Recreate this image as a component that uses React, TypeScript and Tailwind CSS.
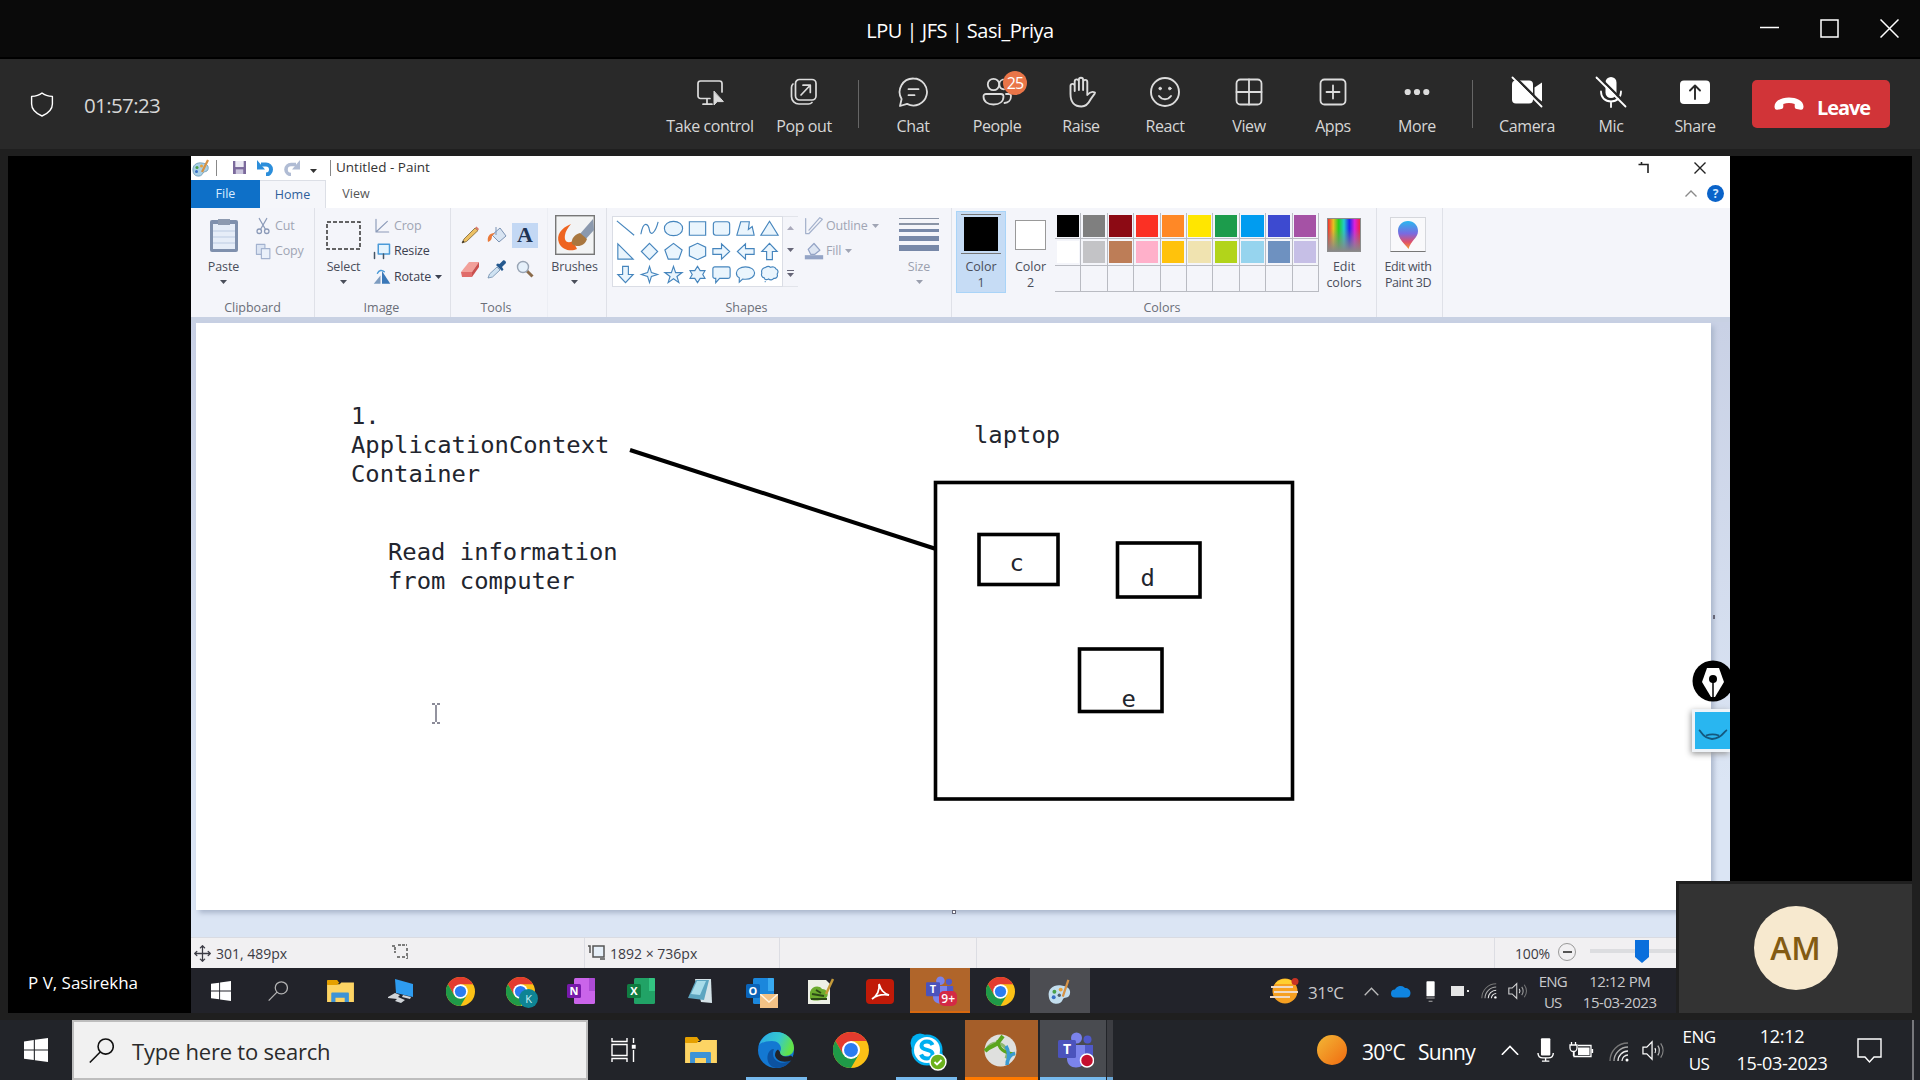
import React from "react";

type P = { children?: React.ReactNode; className?: string };

function Ico({
  s = 24,
  w = 1.5,
  className = "",
  children,
  box = "0 0 24 24",
  h,
}: P & { s?: number; w?: number; box?: string; h?: number }) {
  return (
    <svg
      width={s}
      height={h ?? s}
      viewBox={box}
      fill="none"
      stroke="currentColor"
      strokeWidth={w}
      strokeLinecap="round"
      strokeLinejoin="round"
      className={"shrink-0 " + className}
    >
      {children}
    </svg>
  );
}

/* ---------- meeting toolbar ---------- */

function ToolItem({ label, children, className = "w-[84px]" }: P & { label: string }) {
  return (
    <div className={"flex shrink-0 flex-col items-center pt-[17px] " + className}>
      <div className="flex h-[32px] items-center">{children}</div>
      <div className="mt-[6px] text-[16px] leading-[24px] tracking-[-0.025em] whitespace-nowrap text-[#d6d6d6]">
        {label}
      </div>
    </div>
  );
}

function Bar({ className = "mx-[12px]" }: P) {
  return <div className={"mt-[21px] h-[48px] w-px shrink-0 bg-[#666] " + className} />;
}

function MeetingBar() {
  return (
    <div className="flex h-[90px] items-start bg-[#292929] text-[#dcdcdc]">
      <div className="flex h-[90px] w-[658px] shrink-0 items-center pl-[30px]">
        <Ico s={24} h={26} w={1.4} box="0 0 24 26" className="text-white">
          <path d="M12 2 C9 4.4 5.5 5.2 1.6 5.4 V13 C1.6 18.6 6 22.4 12 25 C18 22.4 22.4 18.6 22.4 13 V5.4 C18.5 5.2 15 4.4 12 2Z" />
        </Ico>
        <span className="ml-[30px] pt-[2px] text-[20.5px] tracking-[-0.03em] text-[#d6d6d6]">01:57:23</span>
      </div>
      <ToolItem label="Take control" className="w-[104px]">
        <Ico s={30} w={1.7} box="0 0 30 30">
          <path d="M15 21.5H5.5a2.5 2.5 0 0 1-2.500-2.500V6.500A2.500 2.500 0 0 1 5.500 4h19A2.500 2.500 0 0 1 27 6.500V15M12 22v5M8 27.200h9" />
          <path d="M19 14.500V28l3.200-3.400H28Z" fill="currentColor" strokeWidth="1" />
        </Ico>
      </ToolItem>
      <ToolItem label="Pop out">
        <Ico s={30} w={1.7} box="0 0 30 30">
          <rect x="6.500" y="2.500" width="20.500" height="20.500" rx="4" />
          <path d="M4 7a5 5 0 0 0-1.500 3.500v9A7.500 7.500 0 0 0 10 27h9.500a5 5 0 0 0 3.500-1.500M12 18l9-9.500M14 8.200h7.300v7.300" />
        </Ico>
      </ToolItem>
      <Bar />
      <ToolItem label="Chat">
        <Ico s={32} w={1.8} box="0 0 32 32">
          <path d="M16.500 2.500a13.500 13.500 0 1 1-6.400 25.400L3 30l1.600-7A13.500 13.500 0 0 1 16.500 2.500ZM11.500 13.200h10M11.500 19.200h6" />
        </Ico>
      </ToolItem>
      <ToolItem label="People">
        <div className="relative">
          <Ico s={32} w={1.8} box="0 0 32 32">
            <circle cx="12.500" cy="8.500" r="5.700" />
            <path d="M5 18h15a2.500 2.500 0 0 1 2.500 2.500c0 5-4 8-10 8s-10-3-10-8A2.500 2.500 0 0 1 5 18Z" />
            <path d="M22 3.500a5 5 0 0 0 1 9.800M25 18h3a2 2 0 0 1 2 2c0 4-2.500 6.800-6.500 7" />
          </Ico>
          <div className="absolute -top-[5px] left-[22px] flex h-[24px] w-[24px] items-center justify-center rounded-full bg-[#e97548] text-[16px] tracking-[-0.05em] text-white">
            25
          </div>
        </div>
      </ToolItem>
      <ToolItem label="Raise">
        <Ico s={32} w={1.9} box="0 0 32 32" className="ml-[2px]">
          <path d="M4.500 18V10a2.100 2.100 0 0 1 4.200 0v5V5.500a2.100 2.100 0 0 1 4.200 0V14 3.800a2.100 2.100 0 0 1 4.200 0V14 6a2.100 2.100 0 0 1 4.200 0v13c2-2.500 4.700-4 7.700-2.500-.3 2-2.500 3.500-4.500 7-2 4-4.500 7-9 7-7 0-11-4.500-11-12.500Z" />
        </Ico>
      </ToolItem>
      <ToolItem label="React">
        <Ico s={32} w={1.9} box="0 0 32 32">
          <circle cx="16" cy="16" r="14" />
          <path d="M10 20c1.500 2 3.500 3.200 6 3.200s4.500-1.200 6-3.200" />
          <circle cx="11.200" cy="12.500" r="1.300" fill="currentColor" strokeWidth="1" />
          <circle cx="20.800" cy="12.500" r="1.300" fill="currentColor" strokeWidth="1" />
        </Ico>
      </ToolItem>
      <ToolItem label="View">
        <Ico s={30} w={1.8} box="0 0 30 30">
          <rect x="2.500" y="2.500" width="25" height="25" rx="4" />
          <path d="M15 2.500v25M2.500 15h25" />
        </Ico>
      </ToolItem>
      <ToolItem label="Apps">
        <Ico s={30} w={1.8} box="0 0 30 30">
          <rect x="2.500" y="2.500" width="25" height="25" rx="4" />
          <path d="M15 8.500v13M8.500 15h13" />
        </Ico>
      </ToolItem>
      <ToolItem label="More">
        <Ico s={28} box="0 0 28 28">
          <g fill="currentColor" stroke="none">
            <circle cx="4.700" cy="14" r="3.100" />
            <circle cx="14" cy="14" r="3.100" />
            <circle cx="23.300" cy="14" r="3.100" />
          </g>
        </Ico>
      </ToolItem>
      <Bar className="mr-[12px] ml-[13px]" />
      <ToolItem label="Camera">
        <Ico s={32} w={1.8} box="0 0 32 32" className="text-white">
          <rect x="1" y="4.500" width="21" height="23" rx="4" fill="currentColor" stroke="none" />
          <path d="M23.500 11.500 31 6.500v19l-7.500-5Z" fill="currentColor" stroke="none" />
          <path d="M3.500 .5 32.500 29.500" stroke="#292929" strokeWidth="2.400" />
          <path d="M1.500 1.500 30.500 30.500" />
        </Ico>
      </ToolItem>
      <ToolItem label="Mic">
        <Ico s={32} w={1.8} box="0 0 32 32" className="text-white">
          <rect x="10.500" y="1" width="11" height="21" rx="5.500" fill="currentColor" stroke="none" />
          <path d="M6 15.500c0 6 4 10 10 10s10-4 10-10M16 26v5" />
          <path d="M3.500 .5 32.500 29.500" stroke="#292929" strokeWidth="2.400" />
          <path d="M1.500 1.500 30.500 30.500" />
        </Ico>
      </ToolItem>
      <ToolItem label="Share">
        <Ico s={32} w={1.900} box="0 0 32 32" className="text-white">
          <rect x="1" y="4.500" width="30" height="23.500" rx="4" fill="currentColor" stroke="none" />
          <path d="M16 23V10M11 14.500l5-5 5 5" stroke="#292929" />
        </Ico>
      </ToolItem>
      <button className="mt-[21px] ml-[15px] flex h-[48px] w-[138px] shrink-0 items-center rounded-[5px] bg-[#d13438] pl-[22px] text-white">
        <svg width="30" height="14" viewBox="0 0 30 14" fill="#fff">
          <path d="M15 .5C22 .5 29.500 3.500 29.500 9.500c0 2.200-1 3.600-2.800 3.300l-4-.8c-1.400-.3-2-1.300-2-2.600V7c-3.600-1.200-7.800-1.200-11.400 0v2.400c0 1.300-.6 2.300-2 2.600l-4 .8C1.500 13.100.5 11.700.5 9.500.5 3.500 8 .5 15 .5Z" />
        </svg>
        <span className="ml-[13px] pt-[8px] text-[20px] leading-[24px] font-bold tracking-[-0.055em]">Leave</span>
      </button>
    </div>
  );
}

/* ---------- paint ribbon ---------- */

function Tri({ className = "" }: P) {
  return (
    <svg width="7" height="4" viewBox="0 0 7 4" className={"shrink-0 " + className}>
      <path d="M0 0h7L3.500 4Z" fill="currentColor" />
    </svg>
  );
}

function Group({ label, className = "", shift = "", children }: P & { label: string; shift?: string }) {
  return (
    <div className={"flex h-[109px] shrink-0 flex-col border-r border-[#dfe1e8] " + className}>
      <div className="flex h-[90px]">{children}</div>
      <div className={"text-center text-[12.5px] leading-[19px] text-[#6a6e78] " + shift}>{label}</div>
    </div>
  );
}

function BigTool({ label, children, className = "" }: P & { label: string }) {
  return (
    <div className={"flex shrink-0 flex-col items-center " + className}>
      <div className="flex h-[51px] items-center pt-[3px]">{children}</div>
      <div className="text-[12.5px] leading-[16px] tracking-[-0.01em]">{label}</div>
      <Tri className="mt-[5px]" />
    </div>
  );
}

function Row({ label, children, className = "text-[#3c4150]", arrow }: P & { label: string; arrow?: boolean }) {
  return (
    <div className={"flex h-[25.500px] items-center text-[12.5px] tracking-[-0.015em] " + className}>
      <div className="flex w-[20px] shrink-0 justify-center">{children}</div>
      <span className="ml-[2px] pt-px">{label}</span>
      {arrow && <Tri className="ml-[4px]" />}
    </div>
  );
}

const SHAPES = [
  "M3 4 L21 19",
  "M3 18 C6 2 11 8 12 14 C13 20 18 17 21 5",
  "M12 4.500c5.500 0 9.500 3.300 9.500 7.500s-4 7.500-9.500 7.500S2.500 16.200 2.500 12 6.500 4.500 12 4.500Z",
  "M3.500 5h17v14h-17Z",
  "M6 5h12a2.500 2.500 0 0 1 2.500 2.500v9A2.500 2.500 0 0 1 18 19H6a2.500 2.500 0 0 1-2.500-2.500v-9A2.500 2.500 0 0 1 6 5Z",
  "M7 5h9l-1 8 4-3 2 9H3Z",
  "M12 4.500 21 19H3Z",
  "M4 4v16h16Z",
  "M12 3.500 20.500 12 12 20.500 3.500 12Z",
  "M12 3.500 21 10.500 17.500 20h-11L3 10.500Z",
  "M12 3.500 20.500 7.500v9L12 20.500 3.500 16.500v-9Z",
  "M3 9h9V4l8.500 8-8.500 8v-5H3Z",
  "M21 9h-9V4l-8.500 8 8.500 8v-5h9Z",
  "M9 20.500V12H4l8-8.500L20 12h-5v8.500Z",
  "M9 3.500V12H4l8 8.500L20 12h-5V3.500Z",
  "M12 3.500 14 10l6.500 2-6.500 2-2 6.500-2-6.500L3.500 12 10 10Z",
  "M12 3.500 14.200 10H21l-5.400 4 2 6.500-5.600-4-5.600 4 2-6.500L3 10h6.800Z",
  "M12 3.500 14.800 8h5L17.500 12l2.300 4h-5L12 20.500 9.200 16h-5L6.500 12 4.200 8h5Z",
  "M5 4h14a2 2 0 0 1 2 2v8a2 2 0 0 1-2 2h-9l-4 4.500V16H5a2 2 0 0 1-2-2V6a2 2 0 0 1 2-2Z",
  "M12 4c5.500 0 9.500 2.800 9.500 6.500S17.500 17 12 17c-1 0-1.500 0-3-.3L5.500 20V15.500C3.500 14.500 2.500 12.500 2.500 10.500 2.500 6.800 6.500 4 12 4Z",
  "M8 4.500c2-1.500 4-1 5 0 2-1 5-.5 5.500 1.500 2.500.8 3 3.500 1.500 5.500 1 3-1 5-3.500 4.500-1 2-4 2-5.500.7C9 18 7 17.500 6.500 15.500 4 15 3 12.500 4 10.500 3 7.500 5 5 8 4.500ZM7 19.500h1",
];

const COLORS = [
  "#000000", "#7f7f7f", "#8c0a14", "#fb3024", "#ff8826", "#ffe600", "#1c9c4c", "#009cf0", "#3d4ad0", "#a552a5",
  "#ffffff", "#c3c3c6", "#bd7d57", "#ffb0ca", "#ffc20c", "#f0e3b0", "#b2d41a", "#96d4ee", "#6e91c0", "#c6bfe6",
  "", "", "", "", "", "", "", "", "", "",
];

function Palette() {
  return (
    <svg width="20" height="18" viewBox="0 0 20 18">
      <path d="M2 12C1 6 6 3 11 4c5 .5 7 3 6 6.500-1 3-4 1.500-5 3.500-1 2.500-3 3.500-6 3C3.500 16.500 2.300 14.500 2 12Z" fill="#a9d0e6" stroke="#5f8fae" strokeWidth=".7" />
      <circle cx="6" cy="8.500" r="1.500" fill="#4aa04a" />
      <circle cx="10.500" cy="7" r="1.500" fill="#e8a13a" />
      <circle cx="5.500" cy="12.500" r="1.500" fill="#3a6fc4" />
      <path d="m11 13 6-12" stroke="#d69245" strokeWidth="2.200" />
    </svg>
  );
}

function PaintTitle() {
  return (
    <div className="flex h-[24px] items-center bg-white pb-px text-[#333]">
      <Palette />
      <div className="ml-[5px] h-[16px] w-px bg-[#888]" />
      <svg width="13" height="13" viewBox="0 0 14 14" className="ml-[16px]">
        <path d="M0 0h14v14H0Z" fill="#7b6a9c" />
        <path d="M2.500 0h9v6.500h-9Z" fill="#eceaf4" />
        <path d="M3 9h8v5H3Z" fill="#c9c4dc" />
      </svg>
      <svg width="17" height="16" viewBox="0 0 17 16" className="ml-[11px]">
        <path d="M4 4.500h5a5 5 0 0 1 0 10" fill="none" stroke="#2b8edb" strokeWidth="4" />
        <path d="M0 0v9.500h8Z" fill="#2b8edb" />
      </svg>
      <svg width="17" height="16" viewBox="0 0 17 16" className="ml-[9px]">
        <path d="M13 4.500H8a5 5 0 0 0 0 10" fill="none" stroke="#b0bcd4" strokeWidth="3.600" />
        <path d="M17 0v9.500H9Z" fill="#b0bcd4" />
      </svg>
      <Tri className="mt-[6px] ml-[10px]" />
      <div className="ml-[13px] h-[16px] w-px bg-[#888]" />
      <span className="ml-[5px] text-[13.5px]">Untitled - Paint</span>
      <svg width="12" height="11" viewBox="0 0 12 11" className="ml-auto" fill="none" stroke="#222" strokeWidth="1.600">
        <path d="M.5 2.500h9.500v8.500M3.500 0v3" />
      </svg>
      <svg width="12" height="12" viewBox="0 0 12 12" className="mr-[24px] ml-[44px]" fill="none" stroke="#222" strokeWidth="1.400">
        <path d="m.5.5 11 11M11.500.5l-11 11" />
      </svg>
    </div>
  );
}

function PaintTabs() {
  return (
    <div className="flex h-[28px] items-stretch bg-white text-[12.5px] leading-[27px]">
      <div className="w-[69px] bg-[#0e70c8] text-center text-[#d8ecff]">File</div>
      <div className="w-[66px] border-t border-r border-[#dcdfe6] bg-[#f5f6fa] text-center text-[#2f5f9a]">Home</div>
      <div className="w-[60px] text-center text-[#555]">View</div>
      <svg width="12" height="7" viewBox="0 0 12 7" className="mt-[10px] ml-auto" fill="none" stroke="#8a8a8a" strokeWidth="1.400">
        <path d="M.5 6.500 6 1l5.500 5.500" />
      </svg>
      <div className="mt-[5px] mr-[6px] ml-[10px] h-[17px] w-[17px] rounded-full bg-[#0a63c9] text-center text-[12px] leading-[17px] font-bold text-[#cfe6ff]">
        ?
      </div>
    </div>
  );
}

function Ribbon() {
  return (
    <div className="flex h-[109px] bg-[#f4f5fa] text-[#4a4e5a]">
      <Group label="Clipboard" className="w-[124px]">
        <BigTool label="Paste" className="w-[65px]">
          <svg width="30" height="36" viewBox="0 0 30 36">
            <rect x="1" y="3" width="28" height="32" rx="2" fill="#7f90ad" />
            <rect x="4" y="7" width="22" height="25" fill="#e6edf8" />
            <path d="M9 2h12v6H9Z" fill="#8d9ab0" />
            <path d="M4 14h22M4 20h22M4 26h22" stroke="#bccbe2" />
          </svg>
        </BigTool>
        <div className="-ml-[3px] pt-[5px]">
          <Row label="Cut" className="text-[#a0a5b4]">
            <Ico s={18} w={1.700} className="text-[#8b9ab8]">
              <path d="M7 2l8 14M17 2 9 16" />
              <circle cx="7" cy="19" r="3" />
              <circle cx="17" cy="19" r="3" />
            </Ico>
          </Row>
          <Row label="Copy" className="text-[#a0a5b4]">
            <Ico s={17} w={1.600} className="text-[#a3b2cf]">
              <path d="M2 2h12v14H2Z" fill="#dbe4f3" />
              <path d="M9 8h12v14H9Z" fill="#eaf0fa" />
            </Ico>
          </Row>
        </div>
      </Group>
      <Group label="Image" className="w-[136px]" shift="-ml-[2px]">
        <BigTool label="Select" className="w-[57px]">
          <svg width="35" height="29" viewBox="0 0 35 29">
            <rect x="1" y="1" width="33" height="27" fill="none" stroke="#333" strokeWidth="1.500" strokeDasharray="4 2" />
          </svg>
        </BigTool>
        <div className="pt-[5px]">
          <Row label="Crop" className="text-[#a0a5b4]">
            <Ico s={16} className="text-[#8b9ab8]" w={1.700}>
              <path d="M3 2v19h19M3 21 20 5" />
            </Ico>
          </Row>
          <Row label="Resize">
            <Ico s={18} className="text-[#4a9ad8]" w={2}>
              <path d="M7 3h15v13H7Z" fill="#e5f3fd" />
              <path d="M2 14v8M14 16v6" stroke="#456" />
            </Ico>
          </Row>
          <Row label="Rotate" arrow>
            <Ico s={18}>
              <path d="M12 4v17h11Z" fill="#3a78b8" stroke="none" />
              <path d="M10 10v11H1Z" fill="#7d9cc0" stroke="none" />
              <path d="M6 7c2-4 6-5 9-2" stroke="#4a9ad8" strokeWidth="2" />
            </Ico>
          </Row>
        </div>
      </Group>
      <Group label="Tools" className="w-[97px] border-r-[#eceef4] pr-[6px]">
        <div className="grid h-[78px] grid-cols-[27px_28px_28px] grid-rows-[34px_34px] place-items-center pt-[10px] pl-[5px]">
          <svg width="18" height="18" viewBox="0 0 18 18">
            <path d="M1 17 3 13 14 2l3 2.500L5.500 15.500Z" fill="#ecc063" stroke="#7b6336" strokeWidth=".8" />
            <path d="m14 2 3 2.500 1-1.500L15.500.5Z" fill="#dc7a6a" />
            <path d="m1 17 1-2.500L3.500 16Z" fill="#222" />
          </svg>
          <svg width="20" height="18" viewBox="0 0 20 18">
            <path d="m5 9 8-7 6 8-7 6Z" fill="#d8e4f2" stroke="#7b93b4" />
            <path d="M1 16c-1-5 1-9 7-9l-3 3c0 3-1 5-4 6Z" fill="#ea7a3a" />
            <path d="M9 1v8" stroke="#7b93b4" />
          </svg>
          <div className="flex h-[25px] w-[26px] items-center justify-center bg-[#c3d8f4] font-['Liberation_Serif'] text-[22px] leading-none font-bold text-[#1e3454]">
            A
          </div>
          <svg width="20" height="17" viewBox="0 0 20 17">
            <path d="m1 11 8-10h10l-7 10Z" fill="#f2a09a" />
            <path d="M1 11h11v5H2Z" fill="#e06c6a" />
            <path d="m12 11 7-10v5l-7 10Z" fill="#c9504e" />
          </svg>
          <svg width="20" height="19" viewBox="0 0 20 19">
            <path d="m1 18 1.500-4L10 7l3 3-7.500 7Z" fill="#cfe2f2" stroke="#6d8cab" strokeWidth=".8" />
            <path d="m9 5 6 6 1.500-1.500L15 7l4-4c0-2-1.500-3-3-2.500L12.500 4l-2-.5Z" fill="#24588e" />
          </svg>
          <svg width="18" height="18" viewBox="0 0 18 18">
            <path d="m10.500 10.500 6 6" stroke="#8a6a4a" strokeWidth="3" />
            <circle cx="7" cy="7" r="5.500" fill="#e6f1fb" stroke="#98a4b4" strokeWidth="1.400" />
          </svg>
        </div>
      </Group>
      <Group label="" className="w-[59px]">
        <BigTool label="Brushes" className="w-[53px]">
          <svg width="40" height="40" viewBox="0 0 40 40">
            <rect x=".7" y=".7" width="38.600" height="38.600" fill="#f2f3f4" stroke="#777" strokeWidth="1.400" />
            <path d="M16 9C6 13 1 20 4 28c3 7 12 9 18 6l-4-8c-6 3-9 0-8-6 .5-4 3-7 6-11Z" fill="#ee6420" />
            <path d="M38 4 24 20l6 5 9-10Z" fill="#8b99ae" />
            <path d="M25 18c-6 2-9 6-8 11 5 4 13 2 15-5Z" fill="#a9773f" />
          </svg>
        </BigTool>
      </Group>
      <Group label="Shapes" className="w-[345px] pl-[5px]" shift="pr-[70px]">
        <div className="mt-[8px] grid h-[71px] w-[171px] grid-cols-7 grid-rows-3 place-items-center border border-[#dadde5] bg-white">
          {SHAPES.map((d, i) => (
            <svg key={i} width="23" height="23" viewBox="0 0 24 24" fill="#eaf5fd" stroke="#4585bd" strokeWidth="1.200">
              <path d={d} fill={i < 2 ? "none" : undefined} />
            </svg>
          ))}
        </div>
        <div className="mt-[8px] flex h-[71px] w-[15px] flex-col items-center justify-around border-y border-[#e2e4ea] text-[#667]">
          <Tri className="rotate-180 text-[#aab]" />
          <Tri />
          <div className="flex flex-col items-center gap-[2px]">
            <div className="h-px w-[7px] bg-[#667]" />
            <Tri />
          </div>
        </div>
        <div className="w-[96px] pt-[5px] pl-[6px]">
          <Row label="Outline" className="text-[#a0a5b4]" arrow>
            <Ico s={20} className="text-[#a5b2cc]">
              <path d="M2 3v18h4L22 4l-3-2L6 17" />
            </Ico>
          </Row>
          <Row label="Fill" className="text-[#a0a5b4]" arrow>
            <Ico s={20} className="text-[#94a4c6]">
              <path d="m5 10 7-7 7 8-6 5H8Z" fill="#dde5f2" />
              <path d="M1 17h22v5H1Z" fill="#94a4c6" stroke="none" />
            </Ico>
          </Row>
        </div>
        <BigTool label="Size" className="w-[50px] text-[#9a9fae]">
          <div className="-mt-[2px] flex w-[40px] flex-col gap-[4px]">
            <div className="h-[1px] bg-[#8a94a6]" />
            <div className="h-[2px] bg-[#8a94a6]" />
            <div className="h-[3px] bg-[#7788a8]" />
            <div className="h-[5px] bg-[#7788a8]" />
            <div className="h-[6px] bg-[#7788a8]" />
          </div>
        </BigTool>
      </Group>
      <Group label="Colors" className="w-[425px] pl-[4px]" shift="pr-[8px]">
        <div className="mt-[3px] flex h-[82px] w-[50px] flex-col items-center border border-[#a9d4f8] bg-[#c6dcf5] pt-[2px] text-[12.5px] leading-[16px]">
          <div className="mb-[5px] border-y border-[#777] px-px">
            <div className="m-[2px] h-[34px] w-[34px] bg-black" />
          </div>
          <span>Color</span>
          <span>1</span>
        </div>
        <div className="flex w-[49px] flex-col items-center pt-[12px] text-[12.5px] leading-[16px]">
          <div className="mb-[9px] h-[30px] w-[31px] border border-[#999] bg-white" />
          <span>Color</span>
          <span>2</span>
        </div>
        <div className="mt-[5px] grid h-[79px] w-[264px] grid-cols-10 grid-rows-3">
          {COLORS.map((c, i) => (
            <div key={i} className="border-r border-b border-[#b9bbc2] p-[1.500px]">
              <div className="h-full w-full" style={{ backgroundColor: c || "transparent" }} />
            </div>
          ))}
        </div>
        <div className="flex w-[50px] flex-col items-center pt-[10px] text-[12.5px] leading-[16px]">
          <div className="mb-[7px] h-[34px] w-[34px] border border-[#8c8c8c] bg-[linear-gradient(to_bottom,transparent_30%,#888_100%),linear-gradient(to_right,#e33,#e8c020,#2c2,#2cc,#22e,#d2d,#e24)]" />
          <span>Edit</span>
          <span>colors</span>
        </div>
      </Group>
      <Group label="" className="w-[66px]">
        <div className="flex w-[62px] flex-col items-center pt-[9px] text-[12.5px] leading-[16px] tracking-[-0.03em] whitespace-nowrap">
          <div className="mb-[7px] flex h-[35px] w-[36px] items-center justify-center border border-[#d5d7dc] border-b-[#777] bg-[#f9f9fb]">
            <svg width="22" height="30" viewBox="0 0 22 30">
              <defs>
                <linearGradient id="p3d" x1="0" y1="0" x2="0" y2="1">
                  <stop offset="0" stopColor="#28b8f0" />
                  <stop offset=".45" stopColor="#7a6ae0" />
                  <stop offset=".75" stopColor="#e0506a" />
                  <stop offset="1" stopColor="#f0a030" />
                </linearGradient>
              </defs>
              <path d="M11 1c6 0 10 4.500 10 10 0 7-7 9-9.500 18C8 24 1 19 1 11 1 5.500 5 1 11 1Z" fill="url(#p3d)" />
            </svg>
          </div>
          <span>Edit with</span>
          <span>Paint 3D</span>
        </div>
      </Group>
    </div>
  );
}

/* ---------- paint canvas ---------- */

function Drawing() {
  return (
    <svg
      width="1515"
      height="587"
      viewBox="196 323 1515 587"
      fill="none"
      stroke="#000"
      strokeWidth="4"
      className="block bg-white shadow-[3px_3px_5px_#aab6cc]"
    >
      <path d="M630 450 936 549" />
      <rect x="935.500" y="482.500" width="357" height="316.500" strokeWidth="3.600" />
      <rect x="979" y="534.500" width="79" height="50" strokeWidth="3.600" />
      <rect x="1117.500" y="543" width="82.500" height="54" strokeWidth="3.600" />
      <rect x="1079.500" y="649" width="82.500" height="62.500" strokeWidth="3.600" />
      <g stroke="none" fill="#22252e" fontFamily="'DejaVu Sans Mono', monospace" fontSize="23.850">
        <text x="351" y="423.500">1.</text>
        <text x="351" y="452.500">ApplicationContext</text>
        <text x="351" y="481.800">Container</text>
        <text x="388" y="559.800">Read information</text>
        <text x="388" y="589.300">from computer</text>
        <text x="974" y="443">laptop</text>
        <text x="1009.500" y="570.500">c</text>
        <text x="1140.500" y="586">d</text>
        <text x="1121.500" y="706.500">e</text>
      </g>
      <path d="M432 704h3M437 704h3M436 705v17M432 723h3M437 723h3" stroke="#667" strokeWidth="1.400" />
    </svg>
  );
}

function SideTools() {
  return (
    <div className="absolute top-[504px] left-[1490px] w-[49px] overflow-hidden pb-[10px] pl-[10px]">
      <svg width="40" height="42" viewBox="0 0 40 42" className="block">
        <circle cx="22" cy="21" r="20.500" fill="#000" />
        <path d="M16 8h12l5 14-9 15h-4l-9-15Z" fill="#fff" />
        <path d="M22 37V20" stroke="#000" strokeWidth="1.500" />
        <circle cx="22" cy="19" r="4" fill="#000" />
      </svg>
      <div className="mt-[7px] ml-[1px] h-[43px] border-[3px] border-r-0 border-[#eef3f8] bg-[#29b6f0] shadow-[-1px_2px_6px_#999]">
        <svg width="36" height="37" viewBox="0 0 36 37" fill="none" stroke="#14587e" strokeWidth="1.800">
          <path d="M4 18c3 2 3 8 13 9 11-1 11-7 15-9M11 23.500c4-1.500 9-1.500 13 0" />
        </svg>
      </div>
    </div>
  );
}

function StatusBar() {
  return (
    <div className="flex h-[31px] items-center border-t border-[#d9dbe2] bg-[#f1f0f2] text-[14px] text-[#3b3b44]">
      <div className="flex h-full w-[393px] items-center pl-[3px]">
        <Ico s={17} w={1.800}>
          <path d="M12 1v22M1 12h22M9 4l3-3 3 3M9 20l3 3 3-3M4 9l-3 3 3 3M20 9l3 3-3 3" />
        </Ico>
        <span className="ml-[5px] pt-px">301, 489px</span>
        <svg width="18" height="16" viewBox="0 0 18 16" className="mr-[175px] mb-[2px] ml-auto" fill="none" stroke="#555" strokeWidth="1.500">
          <path d="M1 2h3v7M7 1h9" strokeDasharray="3 1" />
          <path d="M6 13h11M16 4v11" strokeDasharray="3 2" />
        </svg>
      </div>
      <div className="flex h-full w-[196px] items-center border-x border-[#dcdde3] pl-[2px]">
        <svg width="19" height="17" viewBox="0 0 19 17" className="mb-[2px]" fill="#e6eff8" stroke="#555" strokeWidth="1.500">
          <path d="M6 2h11v11H6Z" />
          <path d="M1 2h2v7M13 15h5" fill="none" />
        </svg>
        <span className="ml-[4px] pt-px whitespace-nowrap">1892 × 736px</span>
      </div>
      <div className="h-full w-[197px] border-r border-[#dcdde3]" />
      <div className="h-full w-[518px] border-r border-[#dcdde3]" />
      <span className="ml-[20px] w-[36px] shrink-0 pt-px tracking-[-0.01em]">100%</span>
      <div className="mb-[3px] ml-[7px] flex h-[18px] w-[18px] shrink-0 items-center justify-center rounded-full border border-[#999]">
        <div className="h-[2px] w-[9px] bg-[#555]" />
      </div>
      <div className="relative mb-[4px] ml-[14px] h-[4px] grow bg-[#dcdde0]">
        <svg width="14" height="23" viewBox="0 0 14 23" className="absolute -top-[9px] left-[45px]">
          <path d="M0 0h14v17l-7 6-7-6Z" fill="#0a6fdc" />
        </svg>
      </div>
    </div>
  );
}

/* ---------- app icons ---------- */

function WinLogo({ s }: { s: number }) {
  return (
    <svg width={s} height={s} viewBox="0 0 24 24" fill="#fff">
      <path d="M0 3.400 9.800 2v9.500H0ZM10.900 1.800 24 0v11.500H10.900ZM0 12.600h9.800V22L0 20.700ZM10.900 12.600H24V24l-13.100-1.800Z" />
    </svg>
  );
}

function Loupe({ s, color }: { s: number; color: string }) {
  return (
    <svg width={s} height={s} viewBox="0 0 24 24" fill="none" stroke={color} strokeWidth="1.500">
      <circle cx="16" cy="8.200" r="7.300" />
      <path d="M10.800 13.400.8 23.500" />
    </svg>
  );
}

function Folder({ s }: { s: number }) {
  return (
    <svg width={s} height={s * 0.84} viewBox="0 0 32 27">
      <path d="M0 1h12l3 3H0Z" fill="#e09a00" />
      <path d="M0 5h15l2-2h15v24H0Z" fill="#fdd464" />
      <path d="M0 1a1 1 0 0 1 1-1h11l2 3-2 3H0Z" fill="#e5a000" />
      <path d="M5 27V16a1 1 0 0 1 1-1h19a1 1 0 0 1 1 1v11h-5v-6H10v6Z" fill="#3d93d6" />
    </svg>
  );
}

function Chrome({ s }: { s: number }) {
  return (
    <svg width={s} height={s} viewBox="0 0 48 48">
      <circle cx="24" cy="24" r="24" fill="#fbc116" />
      <path d="M3.200 12A24 24 0 0 1 44.800 12H24L13.600 30Z" fill="#e33b2e" />
      <path d="M3.200 12A24 24 0 0 0 24 48L34.400 30 24 34 13.600 30Z" fill="#1f9a48" />
      <circle cx="24" cy="24" r="12" fill="#fff" />
      <circle cx="24" cy="24" r="9.300" fill="#2b7cf0" />
    </svg>
  );
}

function Tile({ letter, dark, light, accent }: { letter: string; dark: string; light: string; accent: string }) {
  return (
    <svg width="28" height="28" viewBox="0 0 28 28">
      <rect x="7" y="1" width="21" height="26" rx="1.500" fill={light} />
      <path d="M22 1h5a1 1 0 0 1 1 1v12h-6Z" fill={accent} />
      <rect x="0" y="7" width="14" height="14" rx="1.500" fill={dark} />
      <text x="7" y="18" textAnchor="middle" fontSize="11" fontWeight="700" fill="#fff" fontFamily="Open Sans">
        {letter}
      </text>
    </svg>
  );
}

function Teams({ s, children }: { s: number; children?: React.ReactNode }) {
  return (
    <svg width={s} height={s} viewBox="0 0 36 36">
      <circle cx="18.500" cy="6" r="5.500" fill="#7b83eb" />
      <circle cx="29.500" cy="7.500" r="4" fill="#5059c9" />
      <path d="M24 13h11v12c0 4-3 6-6 6h-5Z" fill="#5059c9" />
      <path d="M9 13h18v14c0 5-4 8.500-9 8.500S9 32 9 27Z" fill="#7b83eb" />
      <rect x="0" y="8" width="18" height="18" rx="1.500" fill="#4b53bc" />
      <text x="9" y="22" textAnchor="middle" fontSize="14" fontWeight="700" fill="#fff" fontFamily="Open Sans">
        T
      </text>
      {children}
    </svg>
  );
}

function Wifi({ s }: { s: number }) {
  return (
    <svg width={s} height={s} viewBox="0 0 20 20" fill="none" strokeWidth="1.300">
      <path d="M1 19C1 9 9 1 19 1" stroke="#777" />
      <path d="M5 19C5 11.500 11.500 5 19 5" stroke="#aaa" />
      <path d="M9 19c0-5.500 4.500-10 10-10M13 19c0-3.300 2.700-6 6-6" stroke="#e8e8e8" />
      <circle cx="18" cy="18" r="1.500" fill="#fff" />
    </svg>
  );
}

function Speaker({ s }: { s: number }) {
  return (
    <svg width={s} height={s} viewBox="0 0 24 24" fill="none" stroke="#fff" strokeWidth="1.300">
      <path d="M1 8.500h4L10.500 3v18L5 15.500H1Z" />
      <path d="M13.500 9.500c1 1.500 1 3.500 0 5" />
      <path d="M16.500 7c2 3 2 7 0 10" stroke="#bbb" />
      <path d="M19.500 4.500c3.200 4.500 3.200 10.500 0 15" stroke="#888" />
    </svg>
  );
}

function Mic({ s, stand = true }: { s: number; stand?: boolean }) {
  return (
    <svg width={s * 0.7} height={s} viewBox="0 0 17 24" fill="none" stroke="#fff" strokeWidth="1.400">
      <rect x="4" y="0" width="9.500" height="17.500" rx="1" fill="#fff" stroke="none" />
      {stand ? (
        <path d="M1 15c0 3 2 5 5 5h5.500c3 0 5-2 5-5M8.700 20v3.500M5 23.300h7.500" />
      ) : (
        <path d="M4 19.500h9.500M6.500 23.300h4.500" stroke="#aaa" />
      )}
    </svg>
  );
}

function Chevron({ s, color }: { s: number; color: string }) {
  return (
    <svg width={s} height={s * 0.6} viewBox="0 0 18 11" fill="none" stroke={color} strokeWidth="1.600">
      <path d="M.7 10 9 1.500 17.300 10" />
    </svg>
  );
}

/* ---------- taskbar inside the shared screen ---------- */

function Cell({ children, className = "" }: P) {
  return <div className={"flex w-[59.950px] shrink-0 items-center justify-center " + className}>{children}</div>;
}

function SharedTaskbar() {
  return (
    <div className="flex h-[45px] bg-[#22232a] pt-px text-[15px] text-[#c9c9cc]">
      <Cell><WinLogo s={20} /></Cell>
      <Cell className="pr-[5px]"><Loupe s={20} color="#b4b4b4" /></Cell>
      <Cell><Folder s={27} /></Cell>
      <Cell>
        <svg width="26" height="26" viewBox="0 0 26 26">
          <path d="M7 1 25 6v13L8 15Z" fill="#2e9cf0" />
          <path d="m0 19 7-4 5 2-2 2 7 3-4 3-6-2 2-2-9-1ZM15 17l8 2-1 2-8-2Z" fill="#d0d4d8" />
        </svg>
      </Cell>
      <Cell><Chrome s={29} /></Cell>
      <Cell>
        <div className="relative">
          <Chrome s={29} />
          <div className="absolute top-[12px] left-[13px] h-[19px] w-[19px] rounded-full bg-[#0e8494] text-center text-[11px] leading-[19px] text-[#c8f0f4]">K</div>
        </div>
      </Cell>
      <Cell><Tile letter="N" dark="#7719aa" light="#ca64ea" accent="#ae4bd5" /></Cell>
      <Cell><Tile letter="X" dark="#107c41" light="#21a366" accent="#33c481" /></Cell>
      <Cell>
        <svg width="26" height="26" viewBox="0 0 26 26">
          <path d="M8 1h16l1 24-11-1Z" fill="#d5e3e8" />
          <path d="M9 2h13l-5 20L1 20Z" fill="#5da5c0" />
          <path d="M10 3h9L13 17l-9-1Z" fill="#a8dcea" />
        </svg>
      </Cell>
      <Cell>
        <div className="relative">
          <Tile letter="O" dark="#0a63b8" light="#1b87dc" accent="#38a9f0" />
          <svg width="18" height="14" viewBox="0 0 18 14" className="absolute top-[17px] left-[14px]">
            <path d="M0 0h18v14H0Z" fill="#f3c285" />
            <path d="m0 0 9 8 9-8" fill="none" stroke="#fff3e0" strokeWidth="1.500" />
          </svg>
        </div>
      </Cell>
      <Cell>
        <svg width="27" height="27" viewBox="0 0 27 27">
          <path d="M1 2h18l4 4v20H1Z" fill="#eef0e6" />
          <path d="M3 14c2-6 9-7 12-3 5 0 7 5 5 8s-13 5-17 2Z" fill="#6cab2e" />
          <path d="M4 21h16M5 16l12 2M9 12l5 3" stroke="#2d4a16" strokeWidth="2" />
          <path d="M26 1 19 16" stroke="#c49a3a" strokeWidth="2.500" />
        </svg>
      </Cell>
      <Cell>
        <svg width="28" height="25" viewBox="0 0 28 25">
          <rect width="28" height="25" rx="4" fill="#c11a08" />
          <path d="M13 5c2 6 4 9 10 11-6-1-12 0-17 4 5-3 8-9 7-15Z" fill="none" stroke="#fff" strokeWidth="1.800" />
        </svg>
      </Cell>
      <Cell className="-mt-px border-b-2 border-[#d8690e] bg-[#b0652a]">
        <div className="relative">
          <Teams s={28} />
          <div className="absolute top-[15px] left-[13px] h-[15px] w-[18px] rounded-[5px] bg-[#d32a45] text-center text-[12px] leading-[15px] font-semibold text-white">9+</div>
        </div>
      </Cell>
      <Cell><Chrome s={29} /></Cell>
      <Cell className="-mt-px bg-[#4c4d52]">
        <svg width="28" height="28" viewBox="0 -2 20 20">
          <path d="M2 12C1 6 6 3 11 4c5 .5 7 3 6 6.500-1 3-4 1.500-5 3.500-1 2.500-3 3.500-6 3C3.500 16.500 2.300 14.500 2 12Z" fill="#c3deee" />
          <circle cx="6" cy="8.500" r="1.400" fill="#4aa04a" />
          <circle cx="10.500" cy="7" r="1.400" fill="#e8a13a" />
          <circle cx="5.500" cy="12.500" r="1.400" fill="#3a6fc4" />
          <circle cx="9.500" cy="11" r="1.200" fill="#50606e" />
          <path d="m12 12 4-12" stroke="#d69245" strokeWidth="1.600" />
        </svg>
      </Cell>
      <div className="ml-[179px] flex items-center">
        <svg width="31" height="28" viewBox="0 0 31 28">
          <circle cx="16" cy="14" r="12.500" fill="#f6a021" />
          <path d="M6 7a12.500 12.500 0 0 1 20 0Z" fill="#ffcf30" />
          <path d="M2 10h22M5 15h24M1 20h20" stroke="#efd9c4" strokeWidth="2.200" />
          <circle cx="26" cy="4.500" r="3.500" fill="#c93324" />
        </svg>
        <span className="ml-[8px] w-[38px] pt-[4px] text-[17px] tracking-[-0.03em]">31°C</span>
        <div className="ml-[18px] flex w-[15px]"><Chevron s={15} color="#bbb" /></div>
        <svg width="20" height="13" viewBox="0 0 20 13" className="ml-[12px]">
          <path d="M4 12.500a4 4 0 0 1 0-8A6 6 0 0 1 14 3c3 0 5.500 2 5.500 5s-2 4.500-4 4.500Z" fill="#0f84e0" />
        </svg>
        <div className="ml-[12px]"><Mic s={21} stand={false} /></div>
        <svg width="19" height="10" viewBox="0 0 19 10" className="ml-[13px]" fill="#e5e5e5">
          <path d="M0 0h13v10H0ZM16 4h2v2h-2Z" />
        </svg>
        <div className="ml-[11px]"><Wifi s={16} /></div>
        <div className="ml-[11px] opacity-80"><Speaker s={20} /></div>
        <div className="ml-[8px] w-[34px] pt-px text-center leading-[21px] tracking-[-0.06em]">
          <div>ENG</div>
          <div>US</div>
        </div>
        <div className="ml-[10px] w-[80px] pt-px text-center leading-[21px] tracking-[-0.03em] whitespace-nowrap">
          <div>12:12 PM</div>
          <div>15-03-2023</div>
        </div>
      </div>
    </div>
  );
}

/* ---------- desktop taskbar ---------- */

function AppCell({ children, className = "", line = "" }: P & { line?: string }) {
  return (
    <div className={"flex h-[60px] shrink-0 flex-col items-center " + className}>
      <div className="flex h-[57px] items-center justify-center pt-[3px]">{children}</div>
      <div className={"h-[3px] " + line} />
    </div>
  );
}

function Taskbar() {
  return (
    <div className="flex h-[60px] bg-[#222429] text-white">
      <div className="flex w-[72px] items-center justify-center"><WinLogo s={24} /></div>
      <div className="flex w-[516px] items-center border-2 border-[#bdbdbd] bg-[#f1f1f1] pl-[15px]">
        <Loupe s={25} color="#111" />
        <span className="ml-[18px] pt-[3px] text-[22px] tracking-[-0.01em] text-[#2b2b2b]">Type here to search</span>
      </div>
      <div className="flex w-[72px] items-center justify-center">
        <svg width="26" height="24" viewBox="0 0 26 24" fill="none" stroke="#fff" strokeWidth="1.400">
          <path d="M1 6.500h15v11H1ZM1 0v3.500h15V0M1 24v-3.500h15V24M22.500 0v5M22.500 12v12" />
          <rect x="21.500" y="7.500" width="2.500" height="2.500" fill="#fff" />
        </svg>
      </div>
      <AppCell className="w-[81px]"><Folder s={32} /></AppCell>
      <AppCell className="w-[70px]" line="w-[61px] bg-[#76b9ed]">
        <svg width="36" height="36" viewBox="0 0 36 36">
          <defs>
            <linearGradient id="e1" x1="0" y1="0" x2="1" y2="0.300">
              <stop offset="0" stopColor="#2aa8e8" />
              <stop offset=".6" stopColor="#35c8d0" />
              <stop offset="1" stopColor="#62e24a" />
            </linearGradient>
          </defs>
          <circle cx="18" cy="18" r="18" fill="#1378d2" />
          <path d="M1 13C4 5 10 0 18 0c10 0 18 7 18 16 0 5-4 8-9 8-4 0-6-2-5-4 3-5-1-11-8-11S3 11 1 13Z" fill="url(#e1)" />
          <path d="M16 17c-4 9 4 16 13 13l4.500-2C30 33 25 36 18 36 11 35 8 28 10 22c1-3 3-5 6-5Z" fill="#0c52a0" />
          <path d="M22 20c0 4 6 6 11 3.500l3 3L33 28.500c-8 3-15 0-16-5 0-3 1-5 3-6Z" fill="#222429" />
        </svg>
      </AppCell>
      <AppCell className="w-[80px]"><Chrome s={36} /></AppCell>
      <AppCell className="w-[71px]" line="w-[61px] bg-[#76b9ed]">
        <div className="relative">
          <svg width="34" height="34" viewBox="0 0 34 34">
            <circle cx="10" cy="10" r="9.500" fill="#00aff0" />
            <circle cx="24" cy="24" r="9.500" fill="#00aff0" />
            <circle cx="17" cy="17" r="15.500" fill="#00aff0" />
            <circle cx="17" cy="17" r="13" fill="#fff" />
            <path d="M22.500 12c-1-2.500-3-3.500-5.500-3.500-3 0-5.500 1.500-5.500 4.200 0 5.500 11 2.800 11 8 0 3-2.500 4.800-5.500 4.800s-5-1.500-6-4" fill="none" stroke="#00aff0" strokeWidth="4" />
          </svg>
          <svg width="18" height="18" viewBox="0 0 18 18" className="absolute top-[20px] left-[19px]">
            <circle cx="9" cy="9" r="8" fill="#6bb11c" stroke="#fff" strokeWidth="1.500" />
            <path d="m5.500 9 2.500 2.500L12.500 7" fill="none" stroke="#fff" strokeWidth="1.800" />
          </svg>
        </div>
      </AppCell>
      <AppCell className="ml-[2px] w-[75px] border-x border-[#222429] bg-[#a55e29]" line="w-full bg-[#ff7a00]">
        <svg width="33" height="33" viewBox="0 0 33 33" className="-ml-[3px]">
          <circle cx="16.500" cy="16.500" r="16" fill="#dfe0de" />
          <path d="M1.500 17C4 11 9 8 15 9.500c7 2 10 9 7 15" fill="none" stroke="#8fb870" strokeWidth="3" />
          <path d="M1 17C5 13 9 12 13 10L19 2" fill="none" stroke="#5aa51e" strokeWidth="4" />
          <path d="M14 6c0 7 4 13 17 14" fill="none" stroke="#5aa51e" strokeWidth="3" />
          <path d="M31 19c-5 2-8 6-8 12M22 12c3 5 3 12 1 18" fill="none" stroke="#3a9bd2" strokeWidth="3.500" />
        </svg>
      </AppCell>
      <AppCell className="ml-[1px] w-[66px] bg-[#494b50]" line="w-full bg-[#76b9ed]">
        <div className="pl-[6px]">
          <Teams s={36}>
            <circle cx="29" cy="28.500" r="6.500" fill="#c50f2e" stroke="#fff" strokeWidth="1.500" />
          </Teams>
        </div>
      </AppCell>
      <AppCell className="w-[7px] border-l border-[#222429] bg-[#3c3d42]" line="w-full bg-[#6aa6d5]" />
      <div className="ml-[204px] flex items-center">
        <div className="h-[30px] w-[30px] rounded-full bg-[linear-gradient(135deg,#f3b836,#f06a10)]" />
        <span className="ml-[15px] w-[56px] pt-[5px] text-[21px] tracking-[-0.04em]">30°C</span>
        <span className="w-[60px] pt-[5px] text-[21px] tracking-[-0.035em]">Sunny</span>
        <div className="ml-[23px] w-[18px]"><Chevron s={18} color="#fff" /></div>
        <div className="ml-[18px] w-[17px]"><Mic s={24} /></div>
        <svg width="25" height="18" viewBox="0 0 25 18" className="ml-[15px]" fill="none" stroke="#fff" strokeWidth="1.300">
          <path d="M9 4.500h13v11H5V11M23.500 8v4" />
          <rect x="9" y="6.500" width="11.500" height="7.500" fill="#fff" stroke="none" />
          <path d="M1 4h7v3a3.500 3.500 0 0 1-7 0ZM2.500 1v3M6.500 1v3M4.500 11v4" />
        </svg>
        <div className="mt-[3px] ml-[15px]"><Wifi s={20} /></div>
        <div className="ml-[13px]"><Speaker s={23} /></div>
      </div>
      <div className="ml-[11px] w-[46px] pt-[3px] text-center text-[17px] leading-[27px] tracking-[-0.03em]">
        <div>ENG</div>
        <div>US</div>
      </div>
      <div className="ml-[7px] w-[106px] pt-[3px] text-center text-[18px] leading-[27px] tracking-[-0.015em]">
        <div>12:12</div>
        <div>15-03-2023</div>
      </div>
      <svg width="25" height="26" viewBox="0 0 25 26" className="mt-[18px] ml-[22px]" fill="none" stroke="#fff" strokeWidth="1.400">
        <path d="M1 1h23v18h-7l-4.500 5L8 19H1Z" />
      </svg>
      <div className="mr-[6px] ml-auto w-[2px] bg-[#77787c]" />
    </div>
  );
}

export default function App() {
  return (
    <div className="flex h-[1080px] w-[1920px] flex-col overflow-hidden bg-[#1f1f1f] font-['Open_Sans','Noto_Sans',sans-serif]">
      <div className="grid h-[59px] grid-cols-[1fr_auto_1fr] items-center border-b-2 border-black bg-[#0a0a0a] text-white">
        <div />
        <div className="pt-[4px] text-[20px] tracking-[-0.025em]">LPU | JFS | Sasi_Priya</div>
        <div className="flex items-center justify-end gap-[41px] pr-[21px]">
          <svg width="19" height="19" viewBox="0 0 19 19" stroke="#fff" strokeWidth="1.500"><path d="M0 8.500h19" /></svg>
          <svg width="19" height="19" viewBox="0 0 19 19" stroke="#fff" strokeWidth="1.500" fill="none"><path d="M1 1h17v17H1Z" /></svg>
          <svg width="19" height="19" viewBox="0 0 19 19" stroke="#fff" strokeWidth="1.500"><path d="m.5.5 18 18M18.500.5l-18 18" /></svg>
        </div>
      </div>
      <MeetingBar />
      <div className="relative mx-[8px] mt-[7px] mb-[7px] flex h-[857px] bg-black">
        <div className="flex w-[183px] shrink-0 items-end pb-[18px] pl-[20px] text-[17px] text-white">
          P V, Sasirekha
        </div>
        <div className="relative flex w-[1539px] shrink-0 flex-col overflow-hidden bg-white">
          <PaintTitle />
          <PaintTabs />
          <Ribbon />
          <div className="h-[620px] border-t-[5px] border-[#c8d1e3] bg-[linear-gradient(to_bottom,#c9d1e5,#dbe5f4_75%)] pt-px pl-[5px]">
            <Drawing />
            <div className="ml-[756px] h-[4px] w-[4px] border border-[#667] bg-white" />
          </div>
          <StatusBar />
          <SharedTaskbar />
          <SideTools />
          <div className="absolute top-[459px] left-[1522px] h-[4px] w-[2px] bg-[#667]" />
        </div>
        <div className="absolute right-0 bottom-0 flex h-[132px] w-[236px] items-center justify-center border-t-[3px] border-l-[3px] border-[#1f1f1f] bg-[#333] pb-[2px]">
          <div className="flex h-[84px] w-[84px] items-center justify-center rounded-full bg-[#f7e9cf] text-[32px] font-semibold text-[#835b13]">
            AM
          </div>
        </div>
      </div>
      <Taskbar />
    </div>
  );
}
